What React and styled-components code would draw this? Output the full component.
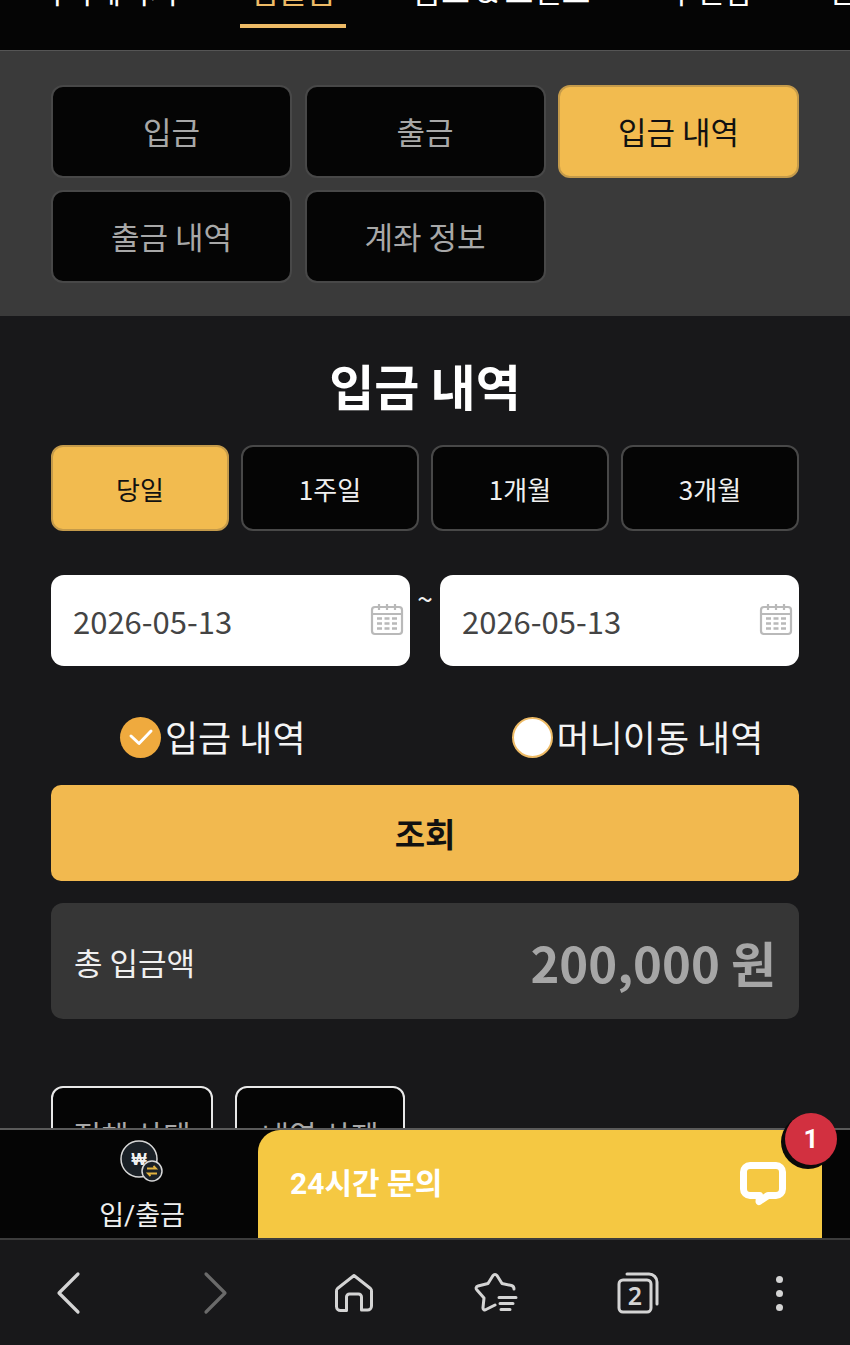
import React from "react"
import styled, { createGlobalStyle } from "styled-components"

const GlobalStyle = createGlobalStyle`
	html, body {
		margin: 0;
		padding: 0;
		background: #18181a;
	}
	* {
		box-sizing: border-box;
	}
`

const topTabs = ["마이페이지", "입출금", "콤프 & 포인트", "우편함", "문의"]
const subTabs = ["입금", "출금", "입금 내역", "출금 내역", "계좌 정보"]
const periods = ["당일", "1주일", "1개월", "3개월"]

function CalendarIcon() {
	return (
		<svg width="34" height="34" viewBox="0 0 34 34" fill="none" stroke="#b9b9b9" strokeWidth="2.200">
			<rect x="2" y="5" width="30" height="27" rx="3" />
			<path d="M2 12h30M9 2v6M17 2v6M25 2v6" />
			<path
				d="M7 16.500h5M14.500 16.500h5M22 16.500h5M7 21.500h5M14.500 21.500h5M22 21.500h5M7 26.500h5M14.500 26.500h5M22 26.500h5"
				strokeWidth="2.500"
			/>
		</svg>
	)
}

function WonIcon() {
	return (
		<svg width="46" height="44" viewBox="0 0 46 44" fill="none">
			<circle cx="20" cy="19" r="18" fill="#1a2026" stroke="#d8d8d8" strokeWidth="1.500" />
			<text x="20" y="24.500" textAnchor="middle" fontSize="16" fontWeight="700" fill="#f2f2f2" fontFamily="'Liberation Sans', 'DejaVu Sans', sans-serif">
				₩
			</text>
			<circle cx="33" cy="31" r="10" fill="#1a2026" stroke="#d8d8d8" strokeWidth="1.500" />
			<path d="M28 28.500h9l-2.500-2.500M38 33.500h-9l2.500 2.500" stroke="#e2b23f" strokeWidth="1.800" />
		</svg>
	)
}

function ChatIcon() {
	return (
		<svg width="48" height="48" viewBox="0 0 48 48" fill="none">
			<path
				d="M10 5.500h26a6.500 6.500 0 0 1 6.500 6.500v17a6.500 6.500 0 0 1-6.500 6.500H28l-9 6 .5-6H10A6.500 6.500 0 0 1 3.500 29V12A6.500 6.500 0 0 1 10 5.500z"
				stroke="#fff"
				strokeWidth="7"
				strokeLinejoin="round"
			/>
		</svg>
	)
}

function BackIcon({ dim }) {
	return (
		<svg width="32" height="44" viewBox="0 0 32 44" fill="none" stroke={dim ? "#6a6a6a" : "#d4d4d4"} strokeWidth="3.200" strokeLinecap="round" strokeLinejoin="round">
			<path d={dim ? "M9 3l19 19L9 41" : "M23 3L4 22l19 19"} />
		</svg>
	)
}

function HomeIcon() {
	return (
		<svg width="40" height="40" viewBox="0 0 40 40" fill="none" stroke="#d4d4d4" strokeWidth="3" strokeLinejoin="round">
			<path d="M20 2.500L36.500 15.500a3 3 0 0 1 1 2.500v15a4 4 0 0 1-4 4H27.500V24a3 3 0 0 0-3-3h-9a3 3 0 0 0-3 3v13.500H6.500a4 4 0 0 1-4-4V18a3 3 0 0 1 1-2.500z" />
		</svg>
	)
}

function StarListIcon() {
	return (
		<svg width="44" height="42" viewBox="0 0 44 42" fill="none" stroke="#d4d4d4" strokeWidth="3" strokeLinecap="round" strokeLinejoin="round">
			<path d="M40 17c0-2-1-3-2.500-3.500L28 11.500 23 3.500c-1-1.500-3-1.500-4 0L14 11.500 4 14c-2 .5-2.500 2.500-1 4L10 26 9 35.500c-.2 2 1.500 3 3 2L21 33" />
			<path d="M25 25.500h17M26 31.500h13M27 37.500h9" />
		</svg>
	)
}

function TabsIcon() {
	return (
		<svg width="42" height="42" viewBox="0 0 42 42" fill="none" stroke="#d4d4d4" strokeWidth="3" strokeLinecap="round">
			<rect x="2" y="8" width="32" height="32" rx="4" />
			<path d="M10 2h22a8 8 0 0 1 8 8v22" />
			<text x="18" y="33" textAnchor="middle" fontSize="25" fontWeight="600" fill="#d4d4d4" stroke="none" fontFamily="'Noto Sans', sans-serif">
				2
			</text>
		</svg>
	)
}

export default function App() {
	return (
		<AppStyled>
			<GlobalStyle />
			<TopNav>
				{topTabs.map((tab, i) => (
					<TopTab key={tab} $active={i === 1}>
						<span>{tab}</span>
					</TopTab>
				))}
			</TopNav>

			<SubPanel>
				{subTabs.map((tab, i) => (
					<SubTab key={tab} $active={i === 2}>
						{tab}
					</SubTab>
				))}
			</SubPanel>

			<Main>
				<Title>입금 내역</Title>
				<PeriodRow>
					{periods.map((period, i) => (
						<PeriodButton key={period} $active={i === 0}>
							{period}
						</PeriodButton>
					))}
				</PeriodRow>

				<DateRow>
					<DateField>
						<span>2026-05-13</span>
						<CalendarIcon />
					</DateField>
					<Tilde>~</Tilde>
					<DateField>
						<span>2026-05-13</span>
						<CalendarIcon />
					</DateField>
				</DateRow>

				<RadioRow>
					<RadioItem>
						<RadioDot $checked>
							<svg width="26" height="20" viewBox="0 0 26 20" fill="none" stroke="#fff" strokeWidth="3" strokeLinecap="round" strokeLinejoin="round">
								<path d="M3 9l8 7.500L23 4" />
							</svg>
						</RadioDot>
						<RadioText>입금 내역</RadioText>
					</RadioItem>
					<RadioItem>
						<RadioDot />
						<RadioText>머니이동 내역</RadioText>
					</RadioItem>
				</RadioRow>

				<SearchButton>조회</SearchButton>

				<TotalBox>
					<TotalLabel>총 입금액</TotalLabel>
					<TotalValue>200,000 원</TotalValue>
				</TotalBox>

				<FilterRow>
					<FilterButton $width={162}>전체 상태</FilterButton>
					<FilterButton $width={170}>내역 삭제</FilterButton>
				</FilterRow>
			</Main>

			<BottomBar>
				<WalletTab>
					<WonIcon />
					<WalletLabel>입/출금</WalletLabel>
				</WalletTab>
				<ChatPanel>
					<ChatTitle>24시간 문의</ChatTitle>
					<ChatIcon />
					<Badge>1</Badge>
				</ChatPanel>
			</BottomBar>

			<BrowserBar>
				<BrowserSlot>
					<BackIcon />
				</BrowserSlot>
				<BrowserSlot>
					<BackIcon dim />
				</BrowserSlot>
				<BrowserSlot>
					<HomeIcon />
				</BrowserSlot>
				<BrowserSlot>
					<StarListIcon />
				</BrowserSlot>
				<BrowserSlot>
					<TabsIcon />
				</BrowserSlot>
				<BrowserSlot>
					<Dots>
						<i />
						<i />
						<i />
					</Dots>
				</BrowserSlot>
			</BrowserBar>
		</AppStyled>
	)
}

const AppStyled = styled.div`
	display: flex;
	flex-direction: column;
	width: 850px;
	height: 1345px;
	overflow: hidden;
	background: #18181a;
	font-family: "Noto Sans CJK KR", "Noto Sans", sans-serif;
	color: #fff;
`

const TopNav = styled.nav`
	display: flex;
	flex: 0 0 51px;
	gap: 56px;
	padding-left: 25px;
	overflow: hidden;
	background: #050505;
	border-bottom: 1px solid #555;
`

const TopTab = styled.div`
	flex: 0 0 auto;
	height: 28px;
	padding: 0 10.500px;
	border-bottom: 4px solid ${(p) => (p.$active ? "#eebb66" : "transparent")};
	color: ${(p) => (p.$active ? "#eebb66" : "#fff")};
	font-size: 31px;
	line-height: 31px;

	&:first-child {
		margin-right: -5px;
	}

	span {
		display: block;
		margin-top: -26px;
		white-space: nowrap;
	}
`

const SubPanel = styled.div`
	display: grid;
	flex: 0 0 265px;
	grid-template-columns: 241px 241px 241px;
	grid-auto-rows: 93px;
	gap: 12px 12.500px;
	align-content: start;
	padding: 34px 51px 0;
	background: #3a3a3a;
`

const SubTab = styled.div`
	display: flex;
	align-items: center;
	justify-content: center;
	padding-bottom: 2px;
	border: 2px solid ${(p) => (p.$active ? "#c49a4a" : "#484848")};
	border-radius: 12px;
	background: ${(p) => (p.$active ? "#f2bb4f" : "#050505")};
	color: ${(p) => (p.$active ? "#111" : "#a8a8a8")};
	font-size: 31px;
`

const Main = styled.main`
	display: flex;
	flex: 1;
	flex-direction: column;
	min-height: 0;
	overflow: hidden;
	padding: 0 51px;
`

const Title = styled.h1`
	flex: 0 0 66px;
	margin: 36px 0 0;
	color: #fff;
	font-size: 49px;
	font-weight: 700;
	line-height: 66px;
	text-align: center;
`

const PeriodRow = styled.div`
	display: grid;
	flex: 0 0 auto;
	grid-template-columns: repeat(4, 178px);
	gap: 12px;
	margin-top: 27px;
`

const PeriodButton = styled.div`
	display: flex;
	align-items: center;
	justify-content: center;
	height: 86px;
	border: 2px solid ${(p) => (p.$active ? "#c49a4a" : "#484848")};
	border-radius: 12px;
	background: ${(p) => (p.$active ? "#f2bb4f" : "#050505")};
	color: ${(p) => (p.$active ? "#111" : "#f0f0f0")};
	font-size: 26px;
`

const DateRow = styled.div`
	display: flex;
	flex: 0 0 auto;
	margin-top: 44px;
`

const DateField = styled.div`
	display: flex;
	flex: 0 0 359px;
	align-items: center;
	justify-content: space-between;
	height: 91px;
	padding: 0 6px 0 22px;
	border-radius: 13px;
	background: #fff;
	color: #444;
	font-size: 31px;

	svg {
		margin-top: -3px;
	}
`

const Tilde = styled.div`
	flex: 0 0 30px;
	color: #eee;
	font-size: 28px;
	line-height: 46px;
	text-align: center;
`

const RadioRow = styled.div`
	display: flex;
	flex: 0 0 46px;
	gap: 206px;
	margin-top: 48px;
	padding-left: 69px;
	line-height: 46px;
`

const RadioItem = styled.div`
	display: flex;
	align-items: center;
	gap: 4px;
	color: #f4f4f4;
	font-size: 36px;
	white-space: nowrap;
`

const RadioText = styled.span`
	margin-top: -2px;
`

const RadioDot = styled.span`
	display: flex;
	flex: 0 0 41px;
	align-items: center;
	justify-content: center;
	height: 41px;
	border-radius: 50%;
	background: ${(p) => (p.$checked ? "#efaa3e" : "#fff")};
	border: ${(p) => (p.$checked ? "none" : "2px solid #eebb66")};
`

const SearchButton = styled.div`
	display: flex;
	flex: 0 0 96px;
	align-items: center;
	justify-content: center;
	margin-top: 25px;
	border-radius: 10px;
	background: #f2b94f;
	color: #111;
	font-size: 33px;
	font-weight: 700;
`

const TotalBox = styled.div`
	display: flex;
	flex: 0 0 116px;
	align-items: center;
	justify-content: space-between;
	margin-top: 22px;
	padding: 0 23px;
	border-radius: 12px;
	background: #363636;
`

const TotalLabel = styled.div`
	color: #f0f0f0;
	font-size: 31px;
`

const TotalValue = styled.div`
	color: #a6a6a6;
	font-size: 49px;
	font-weight: 700;
`

const FilterRow = styled.div`
	display: flex;
	flex: 0 0 auto;
	gap: 22px;
	margin-top: 67px;
`

const FilterButton = styled.div`
	display: flex;
	flex: 0 0 ${(p) => p.$width}px;
	justify-content: center;
	height: 80px;
	padding-top: 26px;
	border: 2px solid #e8e8e8;
	border-radius: 12px;
	background: #050505;
	color: #a8a8a8;
	font-size: 30px;
	line-height: 40px;
`

const BottomBar = styled.div`
	display: flex;
	flex: 0 0 112px;
	padding-right: 28px;
	background: #050505;
	border-top: 2px solid #5a5a5a;
	border-bottom: 2px solid #3c3c3c;
`

const WalletTab = styled.div`
	display: flex;
	flex: 0 0 258px;
	flex-direction: column;
	align-items: center;
	padding: 10px 0 0 26px;
`

const WalletLabel = styled.div`
	margin-top: 14px;
	color: #f0f0f0;
	font-family: Roboto, "Noto Sans CJK KR", sans-serif;
	font-size: 27px;
	line-height: 36px;
`

const ChatPanel = styled.div`
	position: relative;
	display: flex;
	flex: 1;
	align-items: center;
	justify-content: space-between;
	padding: 0 34px 0 32px;
	border-top-left-radius: 22px;
	background: #f5c842;
`

const ChatTitle = styled.div`
	margin-bottom: 6px;
	color: #fff;
	font-family: Roboto, "Noto Sans CJK KR", sans-serif;
	font-size: 30px;
	font-weight: 700;
`

const Badge = styled.div`
	position: absolute;
	top: -17px;
	right: -15px;
	display: flex;
	align-items: center;
	justify-content: center;
	width: 52px;
	height: 52px;
	border-radius: 50%;
	background: #d23040;
	box-shadow: -3px 3px 0 1px #0a0a0a;
	color: #fff;
	font-family: Roboto, sans-serif;
	font-size: 26px;
	font-weight: 700;
`

const BrowserBar = styled.div`
	display: flex;
	flex: 0 0 105px;
	align-items: flex-start;
	padding-top: 31px;
	background: #18181a;
`

const BrowserSlot = styled.div`
	display: flex;
	flex: 0 0 141.700px;
	align-items: center;
	justify-content: center;
	height: 44px;
`

const Dots = styled.div`
	display: flex;
	flex-direction: column;
	gap: 7px;

	i {
		display: block;
		width: 7px;
		height: 7px;
		border-radius: 50%;
		background: #d4d4d4;
	}
`
